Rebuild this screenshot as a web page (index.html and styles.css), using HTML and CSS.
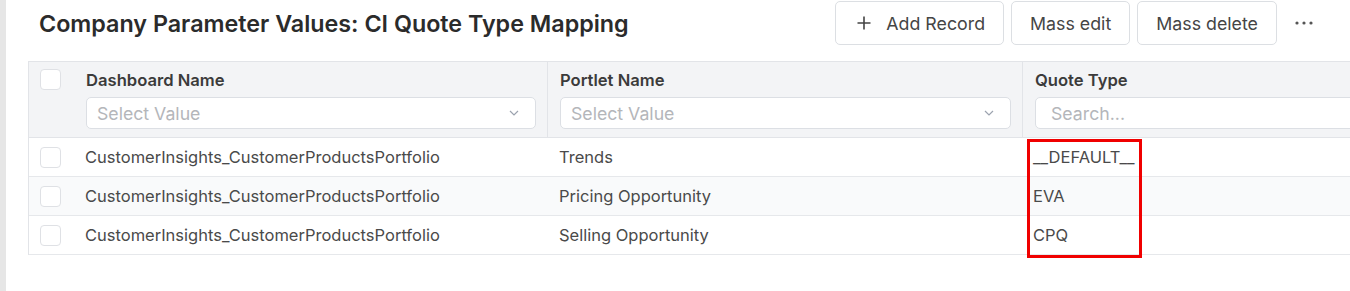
FILE: index.html
```html
<!DOCTYPE html>
<html lang="en">
<head>
<meta charset="utf-8">
<title>Company Parameter Values: CI Quote Type Mapping</title>
<link rel="stylesheet" href="styles.css">
</head>
<body>
<div class="app">
  <div class="edge"></div>
  <main class="main">
    <header class="toolbar">
      <h1 class="title">Company Parameter Values: CI Quote Type Mapping</h1>
      <div class="actions">
        <button class="btn btn-add" type="button">
          <svg class="plus" width="14" height="14" viewBox="0 0 14 14" aria-hidden="true"><path d="M7 0.5v13M0.5 7h13" stroke="#444" stroke-width="1.6" fill="none"/></svg>
          <span>Add Record</span>
        </button>
        <button class="btn" type="button">Mass edit</button>
        <button class="btn" type="button">Mass delete</button>
        <button class="more" type="button" aria-label="More">
          <svg width="18" height="4" viewBox="0 0 18 4" aria-hidden="true"><circle cx="2" cy="2" r="1.6" fill="#555"/><circle cx="9" cy="2" r="1.6" fill="#555"/><circle cx="16" cy="2" r="1.6" fill="#555"/></svg>
        </button>
      </div>
    </header>

    <div class="table">
      <div class="row head">
        <div class="cell check"><span class="box"></span></div>
        <div class="cell hcell">
          <div class="label">Dashboard Name</div>
          <div class="select"><span class="ph">Select Value</span>
            <svg class="chev" width="10" height="6" viewBox="0 0 10 6" aria-hidden="true"><path d="M1 1l4 4 4-4" stroke="#9ca3af" stroke-width="1.2" fill="none"/></svg>
          </div>
        </div>
        <div class="cell hcell divided">
          <div class="label">Portlet Name</div>
          <div class="select"><span class="ph">Select Value</span>
            <svg class="chev" width="10" height="6" viewBox="0 0 10 6" aria-hidden="true"><path d="M1 1l4 4 4-4" stroke="#9ca3af" stroke-width="1.2" fill="none"/></svg>
          </div>
        </div>
        <div class="cell hcell divided">
          <div class="label">Quote Type</div>
          <div class="search"><span class="ph">Search...</span></div>
        </div>
      </div>

      <div class="body-wrap">
        <div class="row">
          <div class="cell check"><span class="box"></span></div>
          <div class="cell">CustomerInsights_CustomerProductsPortfolio</div>
          <div class="cell pl">Trends</div>
          <div class="cell pq">__DEFAULT__</div>
        </div>
        <div class="row alt">
          <div class="cell check"><span class="box"></span></div>
          <div class="cell">CustomerInsights_CustomerProductsPortfolio</div>
          <div class="cell pl">Pricing Opportunity</div>
          <div class="cell pq">EVA</div>
        </div>
        <div class="row">
          <div class="cell check"><span class="box"></span></div>
          <div class="cell">CustomerInsights_CustomerProductsPortfolio</div>
          <div class="cell pl">Selling Opportunity</div>
          <div class="cell pq">CPQ</div>
        </div>
        <div class="highlight"></div>
      </div>
    </div>
  </main>
</div>
</body>
</html>
```

FILE: styles.css
```css
* { box-sizing: border-box; }
html, body { margin: 0; padding: 0; background: #fff; overflow: hidden; }
body {
  font-family: Inter, "Noto Sans", "Liberation Sans", sans-serif;
  color: #444;
  width: 1350px;
  height: 291px;
}
.app { display: flex; height: 291px; }
.edge { width: 6px; flex: none; background: #e6e6e6; }
.main { flex: 1; padding-left: 22px; min-width: 0; overflow: hidden; }

.toolbar {
  display: flex;
  align-items: center;
  justify-content: space-between;
  height: 44px;
  margin-top: 1px;
  padding-left: 11px;
  padding-right: 37px;
}
.title {
  margin: 0;
  font-size: 23.3px;
  font-weight: 600;
  color: #2b2b2b;
}
.actions { display: flex; align-items: center; gap: 7px; }
.btn {
  height: 44px;
  border: 1px solid #dcdfe3;
  border-radius: 5px;
  background: #fff;
  font-family: inherit;
  font-size: 17.8px;
  color: #454545;
  padding: 0 18px;
  display: flex;
  align-items: center;
}
.btn-add { padding-left: 21px; gap: 15px; }
.plus { display: block; }
.more {
  border: 0;
  background: none;
  padding: 0;
  margin-left: 11px;
  display: flex;
  align-items: center;
}
.more svg { display: block; }

.table {
  margin-top: 16px;
  border-left: 1px solid #e2e4e8;
  border-top: 1px solid #e2e4e8;
  width: 1500px;
}
.row {
  display: grid;
  grid-template-columns: 45px 473px 475px 500px;
  height: 39px;
  border-bottom: 1px solid #e6e8eb;
  align-items: center;
}
.row.alt { background: #f9fafb; }
.cell {
  padding-left: 11px;
  font-size: 16.5px;
  color: #4a4a4a;
  white-space: nowrap;
}
.cell.pl { padding-left: 12px; }
.cell.pq { padding-left: 11px; }
.cell.check { padding-left: 11px; display: flex; }
.box {
  width: 21px;
  height: 21px;
  border: 1px solid #dfe1e5;
  border-radius: 4px;
  background: #fff;
  display: block;
}

.row.head {
  height: 76px;
  background: #f3f4f6;
  align-items: stretch;
  border-bottom: 1px solid #e2e4e8;
}
.head .check { align-items: flex-start; padding-top: 7px; }
.hcell {
  display: flex;
  flex-direction: column;
  padding: 8px 11px 7px 12px;
}
.hcell:nth-child(2) { padding-left: 12px; }
.hcell.divided { border-left: 1px solid #e2e4e8; }
.label {
  height: 20px;
  line-height: 20px;
  font-size: 16.6px;
  font-weight: 600;
  color: #3b3b3b;
}
.select, .search {
  margin-top: 7px;
  height: 32px;
  border: 1px solid #dcdfe4;
  border-radius: 5px;
  background: #fff;
  display: flex;
  align-items: center;
  justify-content: space-between;
  padding: 0 16px 0 10px;
}
.search { padding-left: 15px; margin-right: -20px; }
.ph { font-size: 17.7px; color: #b4b6ba; }
.chev { display: block; }

.body-wrap { position: relative; }
.highlight {
  position: absolute;
  left: 998px;
  top: 1px;
  width: 115px;
  height: 119px;
  border: 3px solid #f00000;
}
```
